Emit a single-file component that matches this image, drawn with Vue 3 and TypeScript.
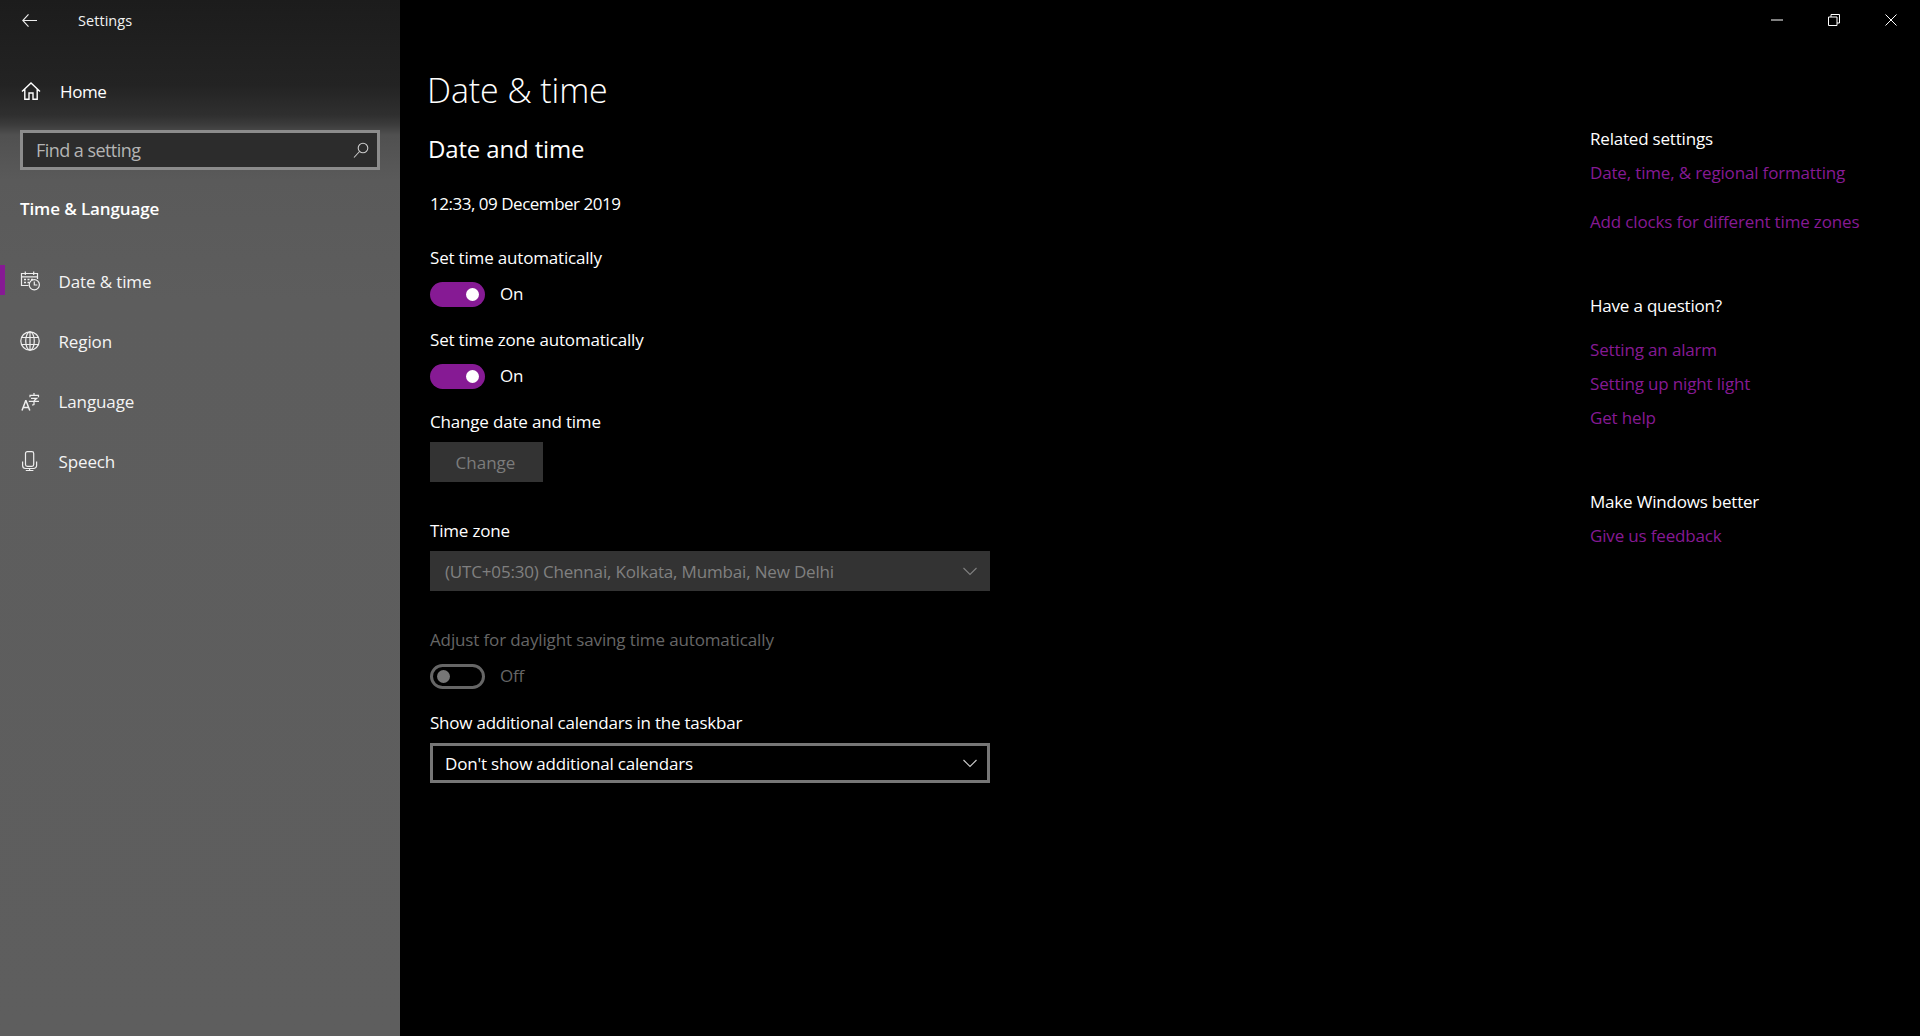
<script setup lang="ts">
const navItems = [
  { label: 'Date & time', icon: 'date', active: true },
  { label: 'Region', icon: 'region', active: false },
  { label: 'Language', icon: 'language', active: false },
  { label: 'Speech', icon: 'speech', active: false },
]
const groups = [
  { title: 'Related settings', cls: 'g1', links: ['Date, time, & regional formatting', 'Add clocks for different time zones'] },
  { title: 'Have a question?', cls: 'g2', links: ['Setting an alarm', 'Setting up night light', 'Get help'] },
  { title: 'Make Windows better', cls: 'g3', links: ['Give us feedback'] },
]
</script>

<template>
  <div class="app">
    <aside class="sidebar">
      <div class="titlebar">
        <svg class="back" width="15" height="13" viewBox="0 0 15 13" fill="none" stroke="#eee" stroke-width="1.1"><path d="M6.500.400.800 6.500l5.700 6.100M.800 6.500H15" /></svg>
        <span class="app-title">Settings</span>
      </div>
      <div class="home">
        <svg width="20" height="20" viewBox="0 0 20 20" fill="none" stroke="#fff" stroke-width="1.4"><path d="M1 10.500 10 2l9 8.500M3.800 8v10.300h4.200v-6.300h4v6.300h4.200V8" /></svg>
        <span>Home</span>
      </div>
      <div class="search">
        <span>Find a setting</span>
        <svg width="16" height="17" viewBox="0 0 16 17" fill="none" stroke="#ccc" stroke-width="1.1"><circle cx="10" cy="6" r="4.800" /><path d="M6.500 9.500 1 15.500" /></svg>
      </div>
      <div class="section">Time &amp; Language</div>
      <nav class="nav">
        <div v-for="item in navItems" :key="item.label" class="nav-item">
          <i v-if="item.active" class="marker"></i>
          <svg class="nav-icon" width="20" height="20" viewBox="0 0 20 20" fill="none" stroke="#eee" stroke-width="1.200">
            <template v-if="item.icon === 'date'">
              <path d="M8.500 14.500H1.500V2.500h16V8M1.500 5.800h16M5.300.400v3.500M13.700.400v3.500" />
              <path d="M4 8.500h2M7.500 8.500h2M11 8.500h2M4 11.500h2M7.500 11.500h1.500" stroke-width="1.500" />
              <circle cx="14.300" cy="13.700" r="5.100" />
              <path d="M14.300 10.500v3.500h3" />
            </template>
            <template v-else-if="item.icon === 'region'">
              <circle cx="10" cy="10" r="9.200" />
              <ellipse cx="10" cy="10" rx="4.300" ry="9.200" />
              <path d="M10 .800v18.400M1.800 6.500h16.400M1.800 13.500h16.400" />
            </template>
            <template v-else-if="item.icon === 'language'">
              <path d="M2 19.500 5.700 9.800h.3l3.800 9.700M3.300 16.500h5.200" stroke-width="1.500" />
              <path d="M10 6.200V4.300h8.500v1.900M14 2v2.300M11 7.300h5.800L14 9.800M8.800 10.300H19M14 9.800v3.700l-1.800.6" />
            </template>
            <template v-else>
              <rect x="5.500" y=".6" width="8.200" height="14.800" rx="1.800" />
              <path d="M2.600 10.500v4a3 3 0 0 0 3 3h8a3 3 0 0 0 3-3v-4M9.600 17.500v2.300M5.800 19.500h7.600" />
            </template>
          </svg>
          <span>{{ item.label }}</span>
        </div>
      </nav>
    </aside>

    <main class="content">
      <h1>Date &amp; time</h1>
      <h2>Date and time</h2>
      <p class="clock">12:33, 09 December 2019</p>

      <p class="label auto1">Set time automatically</p>
      <div class="toggle-row">
        <span class="toggle on"><i></i></span><span class="state">On</span>
      </div>
      <p class="label auto2">Set time zone automatically</p>
      <div class="toggle-row">
        <span class="toggle on"><i></i></span><span class="state">On</span>
      </div>
      <p class="label auto2">Change date and time</p>
      <button class="change">Change</button>

      <p class="label zone">Time zone</p>
      <div class="select disabled">
        <span>(UTC+05:30) Chennai, Kolkata, Mumbai, New Delhi</span>
        <svg width="16" height="9" viewBox="0 0 16 9" fill="none" stroke="#808080" stroke-width="1.100"><path d="M1.500 1 8 7.500 14.500 1" /></svg>
      </div>

      <p class="label daylight">Adjust for daylight saving time automatically</p>
      <div class="toggle-row">
        <span class="toggle off"><i></i></span><span class="state dim">Off</span>
      </div>
      <p class="label extra">Show additional calendars in the taskbar</p>
      <div class="select active">
        <span>Don't show additional calendars</span>
        <svg width="16" height="9" viewBox="0 0 16 9" fill="none" stroke="#ccc" stroke-width="1.100"><path d="M1.500 1 8 7.500 14.500 1" /></svg>
      </div>
    </main>

    <aside class="related">
      <div class="window">
        <svg width="12" height="2" viewBox="0 0 12 2"><path d="M0 1h12" stroke="#fff" stroke-width="1" /></svg>
        <svg width="12" height="12" viewBox="0 0 12 12" fill="none" stroke="#fff" stroke-width="1"><path d="M.5 3h8.500v8.500H.5zM3 3V.5h8.500V9H9" /></svg>
        <svg width="12" height="12" viewBox="0 0 12 12" fill="none" stroke="#fff" stroke-width="1"><path d="M.5.500l11 11M11.500.500l-11 11" /></svg>
      </div>
      <section v-for="g in groups" :key="g.title" :class="['group', g.cls]">
        <h3>{{ g.title }}</h3>
        <a v-for="l in g.links" :key="l">{{ l }}</a>
      </section>
    </aside>
  </div>
</template>

<style>
html, body { margin: 0; background: #000; }
</style>

<style scoped>
.app {
  display: flex;
  width: 1920px;
  height: 1036px;
  overflow: hidden;
  background: #000;
  color: #fff;
  font-family: "Open Sans", "Noto Sans", "Liberation Sans", sans-serif;
  font-size: 17px;
}
.sidebar {
  width: 400px;
  flex: none;
  box-sizing: border-box;
  background: linear-gradient(180deg, #1c1c1c 0, #232323 85px, #2f2f2f 115px, #3c3c3c 125px, #505050 135px, #5a5a5a 180px, #5d5d5d 300px, #5e5e5e 1036px);
}
.titlebar { height: 40px; display: flex; align-items: center; }
.back { margin-left: 22px; }
.app-title { margin-left: 41px; font-size: 14.500px; letter-spacing: .05px; color: #f2f2f2; }
.home { display: flex; align-items: center; height: 24px; margin-top: 39px; padding-left: 21px; gap: 19px; letter-spacing: -.4px; }
.search {
  margin: 27px 20px 0;
  height: 40px;
  box-sizing: border-box;
  border: 3px solid #8c8c8c;
  background: #2c2c2c;
  display: flex;
  align-items: center;
  justify-content: space-between;
  padding: 0 8px 0 13px;
  color: #b4b4b4;
  font-size: 18px;
  letter-spacing: -.55px;
}
.section { margin: 27px 0 0 20px; font-size: 17px; font-weight: 600; letter-spacing: -.12px; }
.nav { margin-top: 31px; }
.nav-item { position: relative; display: flex; align-items: center; height: 60px; padding-left: 20px; gap: 18.500px; letter-spacing: -.12px; color: #f4f4f4; }
.nav-icon { flex: none; margin-top: -1px; }
.marker { position: absolute; left: 0; top: 14px; width: 5px; height: 30px; background: #861a94; }

.content { width: 1160px; flex: none; box-sizing: border-box; padding: 66px 0 0 27px; }
h1 { margin: 0; font-size: 34px; line-height: 48px; font-weight: 300; letter-spacing: -.1px; }
h2 { margin: 17px 0 0 1px; font-size: 24px; line-height: 36px; font-weight: 400; letter-spacing: -.15px; }
p { margin: 0; }
.clock { margin: 25px 0 0 3px; line-height: 24px; letter-spacing: -.48px; }
.label { margin-left: 3px; line-height: 24px; letter-spacing: -.18px; }
.auto1 { margin-top: 30px; }
.auto2 { margin-top: 22px; }
.zone { margin-top: 37px; }
.daylight { margin-top: 37px; color: #666; letter-spacing: -.13px; }
.extra { margin-top: 23px; letter-spacing: -.23px; }
.toggle-row { display: flex; align-items: center; height: 24px; margin: 12px 0 0 3px; gap: 15px; }
.state { letter-spacing: -.2px; line-height: 24px; }
.state.dim { color: #666; }
.toggle { box-sizing: border-box; width: 55px; height: 25px; border-radius: 13px; display: flex; align-items: center; }
.toggle i { width: 13px; height: 13px; border-radius: 50%; }
.toggle.on { background: #861a94; justify-content: flex-end; padding-right: 6px; }
.toggle.on i { background: #fff; }
.toggle.off { border: 3px solid #666; padding-left: 4px; }
.toggle.off i { background: #777; }
.change {
  display: block;
  margin: 8px 0 0 3px;
  width: 113px;
  height: 40px;
  border: 0;
  padding: 0 2px 0 0;
  background: #333;
  color: #7c7c7c;
  font: inherit;
  letter-spacing: 0;
}
.select {
  margin: 8px 0 0 3px;
  width: 560px;
  height: 40px;
  box-sizing: border-box;
  display: flex;
  align-items: center;
  justify-content: space-between;
  padding: 0 12px 0 15px;
  letter-spacing: -.17px;
}
.select.disabled { background: #333; color: #808080; }
.select.active { border: 3px solid #767676; padding: 0 9px 0 12px; margin-top: 8px; letter-spacing: -.2px; }
.related { flex: 1; position: relative; padding: 0 0 0 30px; }
.window { position: absolute; top: 0; right: 0; height: 40px; width: 170px; display: flex; align-items: center; justify-content: flex-end; gap: 45px; padding-right: 23px; box-sizing: border-box; }
.group { display: flex; flex-direction: column; align-items: flex-start; }
h3 { margin: 0; font-size: 17px; line-height: 24px; font-weight: 400; letter-spacing: -.2px; }
a { color: #861a94; line-height: 24px; letter-spacing: -.16px; margin-top: 10px; }
.g1 { padding-top: 127px; }
.g1 a + a { margin-top: 25px; }
.g2 { padding-top: 60px; }
.g2 h3 { margin-bottom: 10px; }
.g2 a + a { margin-top: 10px; }
.g3 { padding-top: 60px; }
</style>
